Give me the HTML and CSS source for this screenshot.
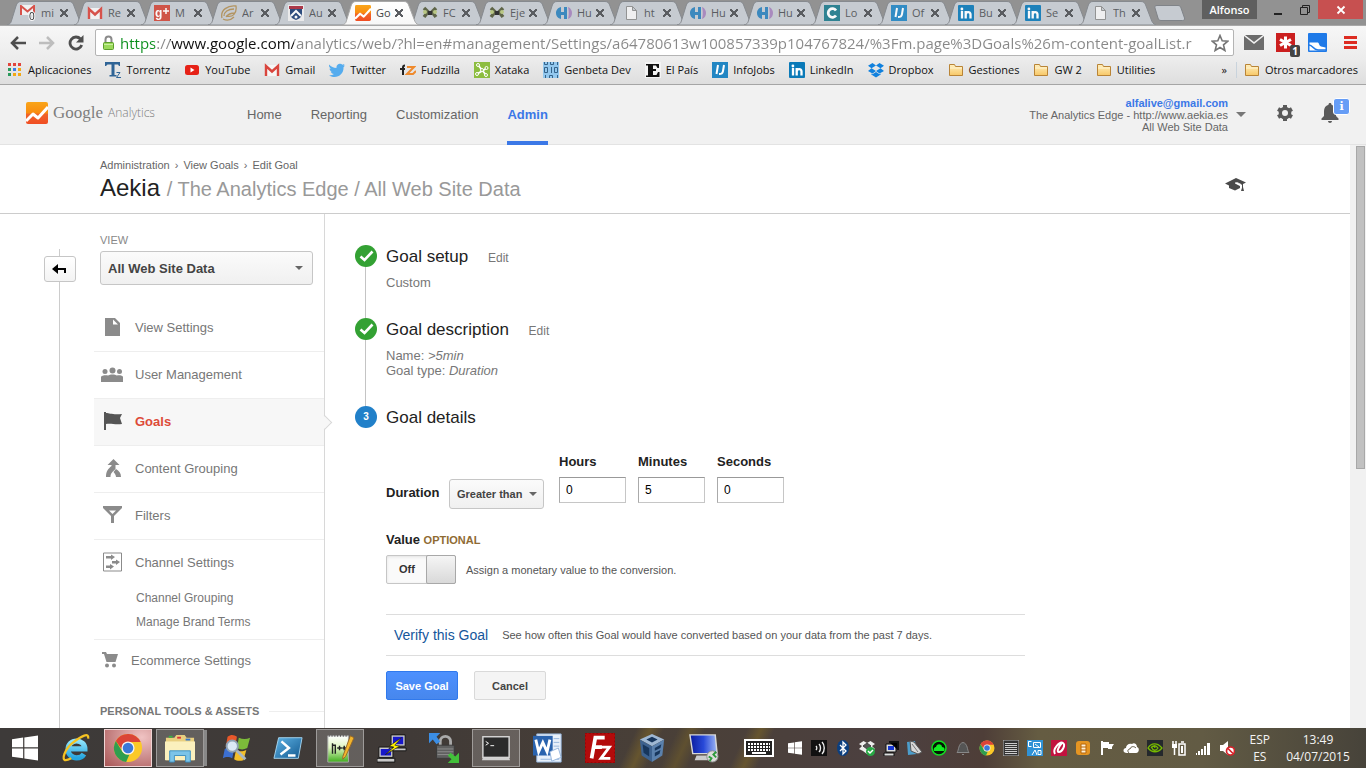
FILE: index.html
```html
<!DOCTYPE html>
<html lang="en">
<head>
<meta charset="utf-8">
<title>Google Analytics</title>
<link rel="stylesheet" href="styles.css">
</head>
<body>
<svg class="sprite" aria-hidden="true">
  <defs>
    <linearGradient id="g-active" x1="0" y1="0" x2="0" y2="1"><stop offset="0" stop-color="#fff"/><stop offset="1" stop-color="#f7f7f7"/></linearGradient>
    <linearGradient id="g-ga" x1="0" y1="0" x2="0" y2="1"><stop offset="0" stop-color="#f9a51a"/><stop offset=".5" stop-color="#f98c0f"/><stop offset=".55" stop-color="#f0652a"/><stop offset="1" stop-color="#f04d22"/></linearGradient>
    <linearGradient id="g-folder" x1="0" y1="0" x2="0" y2="1"><stop offset="0" stop-color="#fff0bf"/><stop offset="1" stop-color="#f7c766"/></linearGradient>
    <linearGradient id="g-ie" x1="0" y1="0" x2="0" y2="1"><stop offset="0" stop-color="#8fe3fb"/><stop offset="1" stop-color="#25a5df"/></linearGradient>
    <linearGradient id="g-ps" x1="0" y1="0" x2="1" y2="1"><stop offset="0" stop-color="#5fb4e6"/><stop offset="1" stop-color="#12588f"/></linearGradient>
    <linearGradient id="g-npp" x1="0" y1="0" x2="0" y2="1"><stop offset="0" stop-color="#fff"/><stop offset=".45" stop-color="#dff5c0"/><stop offset="1" stop-color="#3fae1c"/></linearGradient>
    <linearGradient id="g-rdp" x1="0" y1="0" x2="1" y2="0"><stop offset="0" stop-color="#0b1b9c"/><stop offset=".5" stop-color="#2849d8"/><stop offset="1" stop-color="#9fb8f5"/></linearGradient>
  </defs>
  <symbol id="tab" viewBox="0 0 77 24"><path d="M0 24C4 23 4 21 5 18L9 5C10 2 11 .5 14 .5H62C65 .5 66 2 67 5L72 18C73 21 74 23 77 24Z"/></symbol>
  <symbol id="gmail" viewBox="0 0 16 16"><path fill="#f6f6f6" d="M1 3h14v11H1z"/><path fill="none" stroke="#d9453d" stroke-width="2.4" d="M2 14V4l6 5.5L14 4v10"/></symbol>
  <symbol id="gmail0" viewBox="0 0 16 16"><path fill="#f6f6f6" d="M0 0h15v10H0z"/><path fill="none" stroke="#d9453d" stroke-width="2" d="M1 10V1l6.5 5.500L14 1v9"/><text x="9" y="15" class="t10" fill="#111" stroke="#fff" stroke-width="2" paint-order="stroke">0</text></symbol>
  <symbol id="gplus" viewBox="0 0 16 16"><rect width="16" height="16" fill="#d0483a"/><text x="1" y="12" class="t12 b" fill="#fff">g</text><path stroke="#fff" stroke-width="1.500" d="M9 6h6M12 3v6"/></symbol>
  <symbol id="shell" viewBox="0 0 16 16"><path fill="none" stroke="#b18f55" stroke-width="1.300" d="M1 13C-1 5 7 0 15 1 16 8 12 13 5 11M3 11C3 7 7 4 13 4M5 12c2-3 5-4 9-4M2 14c4 2 8 1 11-2"/></symbol>
  <symbol id="shield" viewBox="0 0 16 16"><rect width="16" height="16" fill="#eee"/><path fill="#1d3f75" d="M2 3h12v5c0 4-3 6-6 7-3-1-6-3-6-7z"/><path fill="#a92a3c" d="M1 1h14v3H1z"/><path stroke="#fff" stroke-width="2" fill="none" d="M3 11l5-5 5 5"/><circle cx="8" cy="12" r="1.500" fill="#fff"/></symbol>
  <symbol id="ga" viewBox="0 0 22 22"><rect width="22" height="22" rx="2" fill="url(#g-ga)"/><path fill="none" stroke="#fff" stroke-width="3" stroke-linejoin="round" d="M0 19l7-7 5 4L22 5"/></symbol>
  <symbol id="joomla" viewBox="0 0 16 16"><g fill="none" stroke="#545b3a" stroke-width="3.500"><path d="M2 3l4 4-4 5M14 3l-4 4 4 5M5 8h6"/></g><circle cx="3" cy="7" r="2" fill="#b8c77c"/><circle cx="13" cy="7" r="2" fill="#b8c77c"/><path fill="#222" d="M6 6h4v4H6z"/></symbol>
  <symbol id="hubble" viewBox="0 0 16 16"><path fill="#2e82bd" d="M5 2v12C1 13 0 10 0 8s1-5 5-6zM5 7h3V2h3v12H8v-4H5z"/><path fill="#a684bd" d="M12 2c3 1 4 4 4 6s-1 5-4 6c1-4 1-8 0-12z"/></symbol>
  <symbol id="file" viewBox="0 0 16 16"><path fill="#f4f4f4" stroke="#8d8d8d" d="M3.500 1.500h6l4 4v9h-10zM9.500 1.500v4h4"/></symbol>
  <symbol id="coursera" viewBox="0 0 16 16"><rect width="16" height="16" fill="#1e7b8c"/><path d="M12 5.500A4.300 4.300 0 1 0 12 10.500" fill="none" stroke="#fff" stroke-width="2.800"/></symbol>
  <symbol id="ij" viewBox="0 0 16 16"><rect width="16" height="16" fill="#2286c3"/><path stroke="#fff" stroke-width="2" fill="none" d="M6 3L4.500 12M12 3l-1 6c-.5 3-2 3-4 3"/></symbol>
  <symbol id="in" viewBox="0 0 16 16"><rect width="16" height="16" rx="1" fill="#0b7ab8"/><circle cx="3.900" cy="4" r="1.400" fill="#fff"/><path fill="none" stroke="#fff" stroke-width="2.300" d="M4 6v7.500M7.700 13.500V6M7.700 9.500c0-3 4.800-3.500 4.800 0v4"/></symbol>
  <symbol id="apps" viewBox="0 0 16 16"><path fill="#e2453c" d="M1 1h3v3H1zM6 1h3v3H6zM11 1h3v3h-3z"/><path fill="#2a9a5c" d="M1 6h3v3H1zM1 11h3v3H1z"/><path fill="#3a7de8" d="M6 6h3v3H6z"/><path fill="#f2a815" d="M11 6h3v3h-3zM11 11h3v3h-3zM6 11h3v3H6z"/></symbol>
  <symbol id="tz" viewBox="0 0 16 16"><path fill="#2f6496" d="M0 0h15v4h-1L13 2.500H9.500V13h2v1.500h-7V13h2V2.500H2.500L1 4H0z"/><path fill="none" stroke="#2f6496" d="M11.500 10.500H15l-3.500 5H16"/></symbol>
  <symbol id="yt" viewBox="0 0 16 16"><rect x="1" y="3" width="14" height="10" rx="2.500" fill="#e62117"/><path fill="#fff" d="M6.500 5.500v5L10.500 8z"/></symbol>
  <symbol id="tw" viewBox="0 0 16 16"><path fill="#55acee" d="M0 2.500c2 2.300 4.500 3.400 7.500 3.500C7 3 9.500 1.500 11 1.700c1 0 1.800.5 2.400 1.100L15.500 2l-1 1.700L16 3.500l-1.500 1.700C15 10.500 11 15 5.500 15c-2 0-4-.6-5.500-1.500 1.800.1 3.500-.3 4.800-1.400C3.300 12 2.200 11 1.800 9.800h1.400C1.600 9.300.6 8 .6 6.400l1.400.4C.3 5.500-.2 4 0 2.500z"/></symbol>
  <symbol id="fz" viewBox="0 0 16 16"><path stroke="#222" stroke-width="2" fill="none" d="M5 3.500c-2 0-2 1-2 2V13M0 7h5"/><path fill="none" stroke="#ef8a2d" stroke-width="2" d="M7 5h7l-7 7h6l3-3"/></symbol>
  <symbol id="xataka" viewBox="0 0 16 16"><rect width="16" height="16" fill="#8cbd3f"/><path stroke="#fff" stroke-width="1.800" d="M4 3l8 10M13 6l-10 6"/><g fill="#8cbd3f" stroke="#fff"><circle cx="4" cy="3" r="1.500"/><circle cx="12.500" cy="6" r="1.500"/><circle cx="3" cy="12" r="1.500"/><circle cx="12" cy="13" r="1.500"/><circle cx="8" cy="8" r="1.500"/></g></symbol>
  <symbol id="genbeta" viewBox="0 0 16 16"><rect width="16" height="16" fill="#93c8ee"/><g fill="none" stroke="#35638a"><path d="M1.500 0v2.500h3V0M7.500 0v2.500h3V0M14.500 0v3M1.500 5.500h3v5h-3zM8.500 5v6M11.500 5.500h3v5h-3zM2.500 13v3M6.500 16v-2.500h3V16M14.500 13v3"/></g></symbol>
  <symbol id="elpais" viewBox="0 0 16 16"><rect width="16" height="16" fill="#f4f4f4"/><path fill="#111" d="M1 2h13v4h-1.500L11 3.500H8V7h3v2H8v4h3.500L13 10h1.500v5H1v-1.500h2V3.500H1z"/></symbol>
  <symbol id="dropbox" viewBox="0 0 16 16"><path fill="#1081de" d="M4.500 1L8 3.500 3.500 6.300 0 3.700zM11.500 1L16 3.700l-3.500 2.600L8 3.500zM0 9l3.500-2.700L8 9.100 4.500 11.500zM12.500 6.300L16 9l-4.500 2.500L8 9.100zM8 10l3.500 2.300 1.200-.7v1L8 15.500l-4.700-2.900v-1l1.200.7z"/></symbol>
  <symbol id="folder" viewBox="0 0 16 16"><path fill="url(#g-folder)" stroke="#b98436" d="M1.500 13.500v-11h5l1 2h7v9z"/><path stroke="#fff3cf" d="M2 6h12"/></symbol>
  <symbol id="chrome" viewBox="0 0 32 32"><circle cx="16" cy="16" r="15" fill="#fbc927"/><path fill="#db4437" d="M3 8.500A15 15 0 0 1 29.500 9.500L16 9.500a7 7 0 0 0-6.500 8z"/><path fill="#2f9e4f" d="M3 8.500L10 20a7 7 0 0 0 7.500 3L14 31A15 15 0 0 1 3 8.500z"/><circle cx="16" cy="16" r="7" fill="#f4f4f4"/><circle cx="16" cy="16" r="5.600" fill="#3b78d8"/></symbol>
  <symbol id="winlogo" viewBox="0 0 28 28"><path fill="#fff" d="M0 4.500L12 2.800V13.300H0zM13.300 2.600L28 .5v12.800H13.300zM0 14.600h12v10.500L0 23.400zM13.300 14.600H28v12.900l-14.700-2.100z"/></symbol>
</svg>

<div class="browser">
  <div class="tabstrip">
    <nav class="tabs" aria-label="Tabs">
      <div class="tab"><svg class="shape"><use href="#tab"/></svg><svg class="ico"><use href="#gmail0"/></svg><span class="name">mi</span><button class="x" aria-label="Close tab"></button></div>
      <div class="tab"><svg class="shape"><use href="#tab"/></svg><svg class="ico"><use href="#gmail"/></svg><span class="name">Re</span><button class="x" aria-label="Close tab"></button></div>
      <div class="tab"><svg class="shape"><use href="#tab"/></svg><svg class="ico"><use href="#gplus"/></svg><span class="name">M</span><button class="x" aria-label="Close tab"></button></div>
      <div class="tab"><svg class="shape"><use href="#tab"/></svg><svg class="ico"><use href="#shell"/></svg><span class="name">Ar</span><button class="x" aria-label="Close tab"></button></div>
      <div class="tab"><svg class="shape"><use href="#tab"/></svg><svg class="ico"><use href="#shield"/></svg><span class="name">Au</span><button class="x" aria-label="Close tab"></button></div>
      <div class="tab active"><svg class="shape"><use href="#tab"/></svg><svg class="ico"><use href="#ga"/></svg><span class="name">Go</span><button class="x" aria-label="Close tab"></button></div>
      <div class="tab"><svg class="shape"><use href="#tab"/></svg><svg class="ico"><use href="#joomla"/></svg><span class="name">FC</span><button class="x" aria-label="Close tab"></button></div>
      <div class="tab"><svg class="shape"><use href="#tab"/></svg><svg class="ico"><use href="#joomla"/></svg><span class="name">Eje</span><button class="x" aria-label="Close tab"></button></div>
      <div class="tab"><svg class="shape"><use href="#tab"/></svg><svg class="ico"><use href="#hubble"/></svg><span class="name">Hu</span><button class="x" aria-label="Close tab"></button></div>
      <div class="tab"><svg class="shape"><use href="#tab"/></svg><svg class="ico"><use href="#file"/></svg><span class="name">ht</span><button class="x" aria-label="Close tab"></button></div>
      <div class="tab"><svg class="shape"><use href="#tab"/></svg><svg class="ico"><use href="#hubble"/></svg><span class="name">Hu</span><button class="x" aria-label="Close tab"></button></div>
      <div class="tab"><svg class="shape"><use href="#tab"/></svg><svg class="ico"><use href="#hubble"/></svg><span class="name">Hu</span><button class="x" aria-label="Close tab"></button></div>
      <div class="tab"><svg class="shape"><use href="#tab"/></svg><svg class="ico"><use href="#coursera"/></svg><span class="name">Lo</span><button class="x" aria-label="Close tab"></button></div>
      <div class="tab"><svg class="shape"><use href="#tab"/></svg><svg class="ico"><use href="#ij"/></svg><span class="name">Of</span><button class="x" aria-label="Close tab"></button></div>
      <div class="tab"><svg class="shape"><use href="#tab"/></svg><svg class="ico"><use href="#in"/></svg><span class="name">Bu</span><button class="x" aria-label="Close tab"></button></div>
      <div class="tab"><svg class="shape"><use href="#tab"/></svg><svg class="ico"><use href="#in"/></svg><span class="name">Se</span><button class="x" aria-label="Close tab"></button></div>
      <div class="tab"><svg class="shape"><use href="#tab"/></svg><svg class="ico"><use href="#file"/></svg><span class="name">Th</span><button class="x" aria-label="Close tab"></button></div>
      <button class="newtab" aria-label="New tab"><svg width="32" height="16" viewBox="0 0 32 16"><path fill="#c6cbd1" stroke="#7f8388" d="M3 .5h21c2 0 2.500 1 3 2.500l3.500 10c.5 1.500-.5 2.500-2 2.500H7c-2 0-2.500-1-3-2.500L1 3C.5 1.500 1 .5 3 .5z"/></svg></button>
    </nav>
    <div class="wincontrols">
      <button class="profile">Alfonso</button>
      <button class="wc" aria-label="Minimize"><svg width="10" height="12"><path fill="#222" d="M1 9h8v2H1z"/></svg></button>
      <button class="wc" aria-label="Restore"><svg width="10" height="12" fill="none" stroke="#222"><path d="M.5 3.500h7v7h-7zM2.500 3V1.500h7v7H8"/></svg></button>
      <button class="wc close" aria-label="Close"><svg width="10" height="12" stroke="#fff" stroke-width="1.800"><path d="M1.500 2.500l7 7M8.500 2.500l-7 7"/></svg></button>
    </div>
  </div>

  <div class="toolbar">
    <button class="tb" aria-label="Back"><svg width="16" height="16" fill="none" stroke="#4e4e4e" stroke-width="2.500"><path d="M16 8H2.500M8 2L2 8l6 6"/></svg></button>
    <button class="tb" aria-label="Forward"><svg width="16" height="16" fill="none" stroke="#bdbdbd" stroke-width="2.500"><path d="M0 8h13.500M8 2l6 6-6 6"/></svg></button>
    <button class="tb" aria-label="Reload"><svg width="16" height="16" fill="none" stroke="#4e4e4e" stroke-width="2.800"><path d="M12.500 4A6 6 0 1 0 13.700 10"/><path fill="#4e4e4e" stroke="none" d="M15.500 0v7.500H8z"/></svg></button>
    <div class="omnibox">
      <svg width="13" height="16" viewBox="0 0 13 16"><path fill="none" stroke="#8a8a8a" stroke-width="2" d="M3.500 8V4.500a3 3 0 0 1 6 0V8"/><rect x="1.500" y="7.500" width="10" height="7" rx="1" fill="#9bd95b" stroke="#5c9e2b"/><path stroke="#c9f0a0" d="M2 9.500h9"/></svg>
      <input class="url" type="text" aria-label="Address" value="https://www.google.com/analytics/web/?hl=en#management/Settings/a64780613w100857339p104767824/%3Fm.page%3DGoals%26m-content-goalList.r">
      <button class="star" aria-label="Bookmark this page"><svg width="18" height="18" viewBox="0 0 18 18"><path fill="#fff" stroke="#757575" stroke-width="1.600" d="M9 1.500l2.200 5.200 5.600.5-4.300 3.700 1.400 5.600L9 13.500l-4.900 3 1.400-5.600L1.200 7.200l5.600-.5z"/></svg></button>
    </div>
    <div class="exts">
      <button class="tb" aria-label="Mail"><svg width="20" height="20"><path fill="#6c6c6c" d="M0 3l10 8 10-8v14H0zM1 2h18l-9 7z"/></svg></button>
      <button class="tb ext" aria-label="LastPass"><svg width="20" height="20"><rect width="19" height="19" fill="#cb1f1f"/><path stroke="#fff" stroke-width="3" d="M9.500 3.500v12M4 6.500l11 6M15 6.500l-11 6"/></svg><span class="count">1</span></button>
      <button class="tb" aria-label="Reader"><svg width="20" height="20"><rect width="19" height="19" rx="1" fill="#1f7ae8"/><path fill="#fff" d="M1.500 9.500h8.500c1.500 1.500 1 3 3 4l4.500 1v3h-16z"/><path fill="none" stroke="#1f7ae8" stroke-width="1.500" d="M1 12c4 0 4 5 9 5h8"/></svg></button>
      <button class="tb" aria-label="Menu"><svg width="13" height="14"><path fill="#dd2c22" d="M0 0h13v3H0zM0 5h13v3H0zM0 10h13v3H0z"/></svg></button>
    </div>
  </div>

  <nav class="bookmarks" aria-label="Bookmarks">
    <a href="#"><svg class="ico"><use href="#apps"/></svg>Aplicaciones</a>
    <a href="#"><svg class="ico"><use href="#tz"/></svg>Torrentz</a>
    <a href="#"><svg class="ico"><use href="#yt"/></svg>YouTube</a>
    <a href="#"><svg class="ico"><use href="#gmail"/></svg>Gmail</a>
    <a href="#"><svg class="ico"><use href="#tw"/></svg>Twitter</a>
    <a href="#"><svg class="ico"><use href="#fz"/></svg>Fudzilla</a>
    <a href="#"><svg class="ico"><use href="#xataka"/></svg>Xataka</a>
    <a href="#"><svg class="ico"><use href="#genbeta"/></svg>Genbeta Dev</a>
    <a href="#"><svg class="ico"><use href="#elpais"/></svg>El País</a>
    <a href="#"><svg class="ico"><use href="#ij"/></svg>InfoJobs</a>
    <a href="#"><svg class="ico"><use href="#in"/></svg>LinkedIn</a>
    <a href="#"><svg class="ico"><use href="#dropbox"/></svg>Dropbox</a>
    <a href="#"><svg class="ico"><use href="#folder"/></svg>Gestiones</a>
    <a href="#"><svg class="ico"><use href="#folder"/></svg>GW 2</a>
    <a href="#"><svg class="ico"><use href="#folder"/></svg>Utilities</a>
    <button class="more" aria-label="More bookmarks">»</button>
    <a href="#" class="other"><svg class="ico"><use href="#folder"/></svg>Otros marcadores</a>
  </nav>

  <header class="ga-header">
    <a class="logo" href="#"><svg width="22" height="22"><use href="#ga"/></svg><span class="google">Google</span><span class="analytics">Analytics</span></a>
    <nav class="ga-nav">
      <a href="#">Home</a><a href="#">Reporting</a><a href="#">Customization</a><a href="#" class="current">Admin</a>
    </nav>
    <button class="account">
      <span class="who"><b>alfalive@gmail.com</b><span>The Analytics Edge - http://www.aekia.es</span><span>All Web Site Data</span></span>
      <span class="caret"></span>
    </button>
    <button class="plain" aria-label="Settings"><svg width="18" height="18" viewBox="0 0 18 18"><g fill="#5a5a5a"><circle cx="9" cy="9" r="6.300"/><path d="M7 1h4v16H7z"/><path d="M7 1h4v16H7z" transform="rotate(60 9 9)"/><path d="M7 1h4v16H7z" transform="rotate(120 9 9)"/></g><circle cx="9" cy="9" r="3" fill="#f1f1f1"/></svg></button>
    <button class="plain bell" aria-label="Notifications"><svg width="18" height="20" viewBox="0 0 18 20"><path fill="#5a5a5a" d="M9 0c1 0 1.500.7 1.500 1.700C13.500 2.500 15 5 15 8v5l2.500 2.500V17H.5v-1.500L3 13V8c0-3 1.500-5.500 4.500-6.300C7.500.7 8 0 9 0zM7 18h4c0 1-1 2-2 2s-2-1-2-2z"/></svg><span class="info">i</span></button>
  </header>

  <div class="viewport">
    <div class="page">
      <div class="titlebar">
        <div>
          <nav class="crumbs" aria-label="Breadcrumb"><a href="#">Administration</a><span>›</span><a href="#">View Goals</a><span>›</span><a href="#">Edit Goal</a></nav>
          <h1>Aekia <small>/ The Analytics Edge / All Web Site Data</small></h1>
        </div>
        <button class="plain edu" aria-label="Education"><svg width="22" height="14" viewBox="0 0 22 14"><path fill="#4a4a4a" d="M0 5.500L11 0l10 4.500-3 1.500v3l1 4h-3l1-3.500V7L12 4.500l-2 1L15 8v2l-5 2.500L4 10V7.500z"/><path fill="none" stroke="#fff" d="M10 5c3-.5 4 .5 6 1.500v4"/></svg></button>
      </div>
      <div class="columns">
        <div class="rail"><button class="back" aria-label="Back"><svg width="16" height="12"><path fill="none" stroke="#000" stroke-width="2" d="M4 6h9v4"/><path fill="#000" d="M6 1v10L0 6z"/></svg></button></div>
        <aside class="side">
          <label class="viewlabel" for="view">VIEW</label>
          <span class="select big"><select id="view"><option>All Web Site Data</option></select></span>
          <ul class="menu">
            <li><a href="#"><svg width="24" height="20" fill="#8b8b8b"><path d="M5 1h10l5 5v13H5z"/><path fill="#fff" d="M13 2.500v5h5z"/></svg>View Settings</a></li>
            <li><a href="#"><svg width="24" height="20" fill="#8b8b8b"><circle cx="5" cy="7.500" r="2.500"/><circle cx="12.500" cy="6.500" r="3"/><circle cx="19.500" cy="7.500" r="2.500"/><path d="M1 18v-5c0-2 6-2 7-1.500 2-1.500 7-1.500 9 0 1-.5 6-.5 6 1.500v5z"/></svg>User Management</a></li>
            <li class="on"><a href="#"><svg width="24" height="20" fill="#555"><path d="M4 1h2v18H4z"/><path d="M6 2c4 0 6 2 16 1l-2 4 2 6c-7 1-11-1-16 0z"/></svg>Goals</a></li>
            <li><a href="#"><svg width="24" height="20" fill="#8b8b8b"><path d="M13.500 1l6 6h-4v4c-3 3-5 4-5 8H6c0-6 2-8 5.500-11V7h-4zM16 11c3 2 5 4 5 8h-5c0-2-1-3-2.500-5z"/></svg>Content Grouping</a></li>
            <li><a href="#"><svg width="24" height="20" fill="#8b8b8b"><path d="M3 1h19v2l-8 8v7h-3v-7L3 3z"/><path fill="#fff" d="M9 5.500h7L12.500 9z"/></svg>Filters</a></li>
            <li><a href="#"><svg width="24" height="20" fill="#8b8b8b"><path fill="none" stroke="#8b8b8b" d="M3.500 1h18v18h-18z"/><path d="M6 4h5V2.500l4 2.500-4 3V6.500H6zM12 9h4V7.500l4 2.500-4 3v-1.500h-4zM6 13.500h4V12l4 2.500-4 3V16H6z"/></svg>Channel Settings</a>
              <ul><li><a href="#">Channel Grouping</a></li><li><a href="#">Manage Brand Terms</a></li></ul></li>
            <li class="shop"><a href="#"><svg width="20" height="18" fill="#8b8b8b"><path d="M1 1h4l1 2h11l-2.500 8H5.500L3 3H1z"/><circle cx="6" cy="14.500" r="2"/><circle cx="13" cy="14.500" r="2"/></svg>Ecommerce Settings</a></li>
          </ul>
          <h2 class="tools">PERSONAL TOOLS &amp; ASSETS</h2>
        </aside>
        <main class="goal">
          <section class="step">
            <span class="dot done"><svg width="22" height="22"><path fill="none" stroke="#fff" stroke-width="2.600" d="M5.500 11.500l4 3.500 8-8.500"/></svg></span>
            <h2>Goal setup <a href="#">Edit</a></h2>
            <p>Custom</p>
          </section>
          <section class="step tall">
            <span class="dot done"><svg width="22" height="22"><path fill="none" stroke="#fff" stroke-width="2.600" d="M5.500 11.500l4 3.500 8-8.500"/></svg></span>
            <h2>Goal description <a href="#">Edit</a></h2>
            <p>Name: <i>&gt;5min</i><br>Goal type: <i>Duration</i></p>
          </section>
          <section class="step last">
            <span class="dot">3</span>
            <h2>Goal details</h2>
          </section>
          <form class="details">
            <div class="duration">
              <label for="cmp">Duration</label>
              <span class="select"><select id="cmp"><option>Greater than</option></select></span>
              <label class="time">Hours<input type="text" value="0"></label>
              <label class="time">Minutes<input type="text" value="5"></label>
              <label class="time">Seconds<input type="text" value="0"></label>
            </div>
            <div class="value">Value <small>OPTIONAL</small></div>
            <label class="money"><input type="checkbox"><span class="switch"><span class="off">Off</span><span class="knob"></span></span>Assign a monetary value to the conversion.</label>
            <div class="verify"><a href="#">Verify this Goal</a><span>See how often this Goal would have converted based on your data from the past 7 days.</span></div>
            <div class="actions"><button type="button" class="btn save">Save Goal</button><button type="button" class="btn">Cancel</button></div>
          </form>
        </main>
      </div>
    </div>
    <div class="scrollbar"><div class="thumb"></div></div>
  </div>

  <footer class="taskbar">
    <button class="start" aria-label="Start"><svg width="26" height="26"><use href="#winlogo"/></svg></button>
    <div class="apps">
      <button aria-label="Internet Explorer"><svg viewBox="0 0 32 32"><path fill="none" stroke="url(#g-ie)" stroke-width="5.500" d="M8 17h17.500c0-5-4-8.500-9-8.500S7.500 12.500 7.500 17.500s4 9 9 9c3.500 0 6.500-1.500 8-4"/><path fill="none" stroke="#f6c322" stroke-width="2.400" d="M5 29c-5 0-1-12 8-19S30-1 29 6M5 29c2 0 4-1 6-2"/></svg></button>
      <button class="live" aria-label="Chrome"><svg viewBox="0 0 32 32"><use href="#chrome"/></svg></button>
      <button class="open stack" aria-label="File Explorer"><svg viewBox="0 0 32 32"><path fill="#e9cf7f" d="M1 5h9l2-3h9l2 3h8v24H1z"/><path fill="#fbf0bd" d="M0 9h32v20H0z"/><path fill="#3cb043" d="M4 3h4v2H4z"/><path fill="#d33" d="M13 4h4v2h-4z"/><path fill="#37c" d="M22 6h5v2h-5z"/><path fill="#7cc4e8" stroke="#3d8fc0" d="M5 31V19h22v12h-5v-7H10v7z"/></svg></button>
      <button aria-label="Windows Search"><svg viewBox="0 0 32 32"><path fill="#e8582a" d="M7 4c4-3 7-2 10 0l-2 11c-4-2-7-2-10 0z"/><path fill="#7cba3a" d="M19 5c4 2 8 2 12 0l-3 11c-4 2-7 2-11 0z"/><path fill="#3c6fd0" d="M4 17c4-2 7-2 10 0l-2 10c-3-2-7-2-10 0z"/><path fill="#f3bf2b" d="M16 18c4 2 7 2 11 0l-3 11c-4 1-7 1-10-1z"/><circle cx="12" cy="14" r="6" fill="#dceaf7" stroke="#8fa3b5" stroke-width="2"/><path stroke="#a9b7c4" stroke-width="3" d="M17 19l9 9"/></svg></button>
      <button aria-label="PowerShell"><svg viewBox="0 0 32 32"><path fill="url(#g-ps)" stroke="#a5d5f0" d="M6 5h25l-4 22H1z"/><path fill="none" stroke="#fff" stroke-width="2.600" d="M9 9l8 7-9 7M16 24h8"/></svg></button>
      <button class="open" aria-label="Notepad++"><svg viewBox="0 0 32 32"><path fill="url(#g-npp)" stroke="#aaa" d="M3 3h22v28H3z"/><path stroke="#555" stroke-dasharray="1 2" stroke-width="2" d="M4 3h20"/><path fill="none" stroke="#222" stroke-width="1.500" d="M8 22V11M8 13h3v9M13 16h5M15.500 13.500v5M18.500 16h4M20.500 13.500v5"/><path fill="#f3b52d" stroke="#94662a" d="M19 25l8-22 4 2-9 20-3 3z"/></svg></button>
      <button aria-label="PuTTY"><svg viewBox="0 0 32 32"><g fill="#c9c9c9" stroke="#111"><path d="M15 2h15v12H15zM13 16h18v3H13zM2 15h15v11H2zM0 27h19v4H0z"/></g><path fill="#1717c9" d="M17 4h11v8H17zM4 17h11v7H4z"/><path fill="#fff200" stroke="#111" stroke-width=".6" d="M26 5l-13 9 5 1-9 8 15-9-5-1z"/></svg></button>
      <button aria-label="WinSCP"><svg viewBox="0 0 32 32"><path fill="none" stroke="#aaa" stroke-width="3" d="M12 14V9a5 5 0 0 1 11 0v5"/><rect x="8" y="13" width="19" height="14" rx="1" fill="#606060" stroke="#3a3a3a"/><path stroke="#8f8f8f" d="M9 17h17M9 20h17M9 23h17"/><path fill="#3b8ee5" d="M0 0h12L8 4l4 5-4 3-4-5-4 4z"/><path fill="#42c03a" d="M32 32H20l4-4-4-4 3-3 5 4 4-4z"/></svg></button>
      <button class="open" aria-label="Command Prompt"><svg viewBox="0 0 32 32"><rect x="2" y="4" width="28" height="22" fill="#2b2b2b" stroke="#d9d9d9" stroke-width="1.500"/><path fill="#d0d0d0" d="M2 26h28l1 3H1z"/><path fill="none" stroke="#fff" d="M5 9l3 2-3 2M10 13.500h4"/></svg></button>
      <button aria-label="Word"><svg viewBox="0 0 32 32"><path fill="#e8f0fa" stroke="#94b4dc" d="M4 1h26v30H4z"/><path stroke="#94b4dc" d="M22 6h6M22 10h6M22 14h6M8 28h20"/><rect y="3" width="21" height="21" fill="#2a63ae"/><path fill="none" stroke="#fff" stroke-width="3" d="M3 7l3 13 4.500-10L15 20l3-13"/><path fill="#fff" stroke="#94b4dc" d="M18 20l9-4 3 10-10 4z"/></svg></button>
      <button aria-label="FileZilla"><svg viewBox="0 0 32 32"><rect width="32" height="32" fill="#b30b0b" stroke="#7d0000" stroke-dasharray="2 2"/><path fill="none" stroke="#fff" stroke-width="4" d="M21 5H11L7 27M9 15h9"/><path fill="none" stroke="#fff" stroke-width="3" d="M16 15h10l-9 12h10"/></svg></button>
      <button aria-label="VirtualBox"><svg viewBox="0 0 32 32"><path fill="#9fb8d3" d="M16 1l13 6-13 7L3 7z"/><path fill="#3d628f" d="M3 7l13 7v17L5 24z"/><path fill="#5b81ad" d="M29 7l-13 7v17l11-7z"/><path fill="#17365c" d="M16 4l6 3-6 3-6-3zM6 12l7 4v9l-6-4zM19 16l7-4-1 4-6 3v2l6-3-1 4-5 3z"/></svg></button>
      <button aria-label="Remote Desktop"><svg viewBox="0 0 32 32"><path fill="#ccc" d="M8 24h14l4 5H6z"/><path fill="url(#g-rdp)" stroke="#d8d8d8" stroke-width="1.500" d="M1 2h27l2 20H4z"/><circle cx="25" cy="25" r="6" fill="#dcdcdc" stroke="#888"/><path fill="none" stroke="#2b9a3a" stroke-width="2" d="M21 25l3 2-2 3M29 20l-3 3 3 3"/></svg></button>
    </div>
    <button class="keyboard" aria-label="Touch keyboard"><svg width="30" height="18"><path fill="#222" stroke="#fff" stroke-width="2" d="M1 1h28v16H1z"/><path stroke="#fff" stroke-width="2" stroke-dasharray="2 1" d="M4 5h22M4 8h22M4 11h22"/><path stroke="#fff" stroke-width="2" d="M8 14h14"/></svg></button>
    <div class="tray">
      <svg viewBox="-2 -2 32 32"><use href="#winlogo" width="28" height="28"/></svg>
      <svg viewBox="0 0 16 16"><rect width="16" height="16" fill="#111"/><path fill="none" stroke="#eee" stroke-width="1.400" d="M5 6c1 1 1 3 0 4M8 4c2 2 2 6 0 8M11 2c3 3 3 9 0 12"/></svg>
      <svg viewBox="0 0 16 16"><ellipse cx="8" cy="8" rx="6" ry="8" fill="#0b3f80"/><path fill="none" stroke="#fff" stroke-width="1.300" d="M5 5l6 6-3 3V2l3 3-6 6"/></svg>
      <svg viewBox="0 0 16 16"><path fill="#eee" d="M4.500 1L8 3l3.500-2L16 4l-3 2 3 3-4 2-4 3-4-3-4-2 3-3-3-2z"/><path stroke="#444" d="M4 6l4-3 4 3-4 3z" fill="#555"/><circle cx="11.500" cy="11.500" r="4.500" fill="#27a844"/><path fill="none" stroke="#fff" stroke-width="1.500" d="M9 11l2 2 3-3"/></svg>
      <svg viewBox="0 0 16 16"><path fill="#ddd" stroke="#111" d="M3 4h10v8H3zM1 13h10v3H1z"/><path fill="#1738d0" d="M5 6h6v4H5z"/><path stroke="#111" stroke-width="2" d="M6 2h9v8"/></svg>
      <svg viewBox="0 0 16 16"><path fill="#4c9dcb" d="M0 2l8-1 2 13-9 1z"/><path fill="#d8d8d8" stroke="#555" d="M3 1l4 1 8 10-4 2-7-3z"/><path stroke="#777" d="M5 4l6 8"/></svg>
      <svg viewBox="0 0 16 16"><circle cx="8" cy="8" r="7" fill="#041504" stroke="#11df22" stroke-width="1.500"/><path fill="#11ef22" d="M3 11c-1-3 1-4 2-4 1-4 6-3 6 0 3 0 3 3 2 4z"/></svg>
      <svg viewBox="0 0 16 16"><path fill="#555" stroke="#888" d="M2 12.500c2-2 1-9 6-10 5 1 4 8 6 10zM7 14.500h2"/></svg>
      <svg viewBox="0 0 32 32"><use href="#chrome"/></svg>
      <svg viewBox="0 0 16 16"><rect width="16" height="16" fill="#333" stroke="#bbb"/><path stroke="#ccc" d="M2 3.500h12M2 5.500h12M2 7.500h12M2 9.500h12M2 11.500h12M2 13.500h12"/></svg>
      <svg viewBox="0 0 16 16"><rect width="16" height="16" fill="#2f92d6"/><path fill="none" stroke="#fff" d="M1.500 1.500h3M1.500 1.500v5h3M6.500 2.500h7v5h-7zM8 4l4 3M5 15l3-5 2 5M11 10.500h3v4h-3z"/></svg>
      <svg viewBox="0 0 16 16"><rect width="16" height="16" fill="#c2123f"/><path fill="none" stroke="#fff" stroke-width="2" d="M4 14C1 9 9 1 12 3s-1 9-4 9 0-6 3-9"/></svg>
      <svg viewBox="0 0 16 16"><rect x="1" y="1" width="14" height="14" rx="3" fill="#e59522"/><path fill="#fff2d6" stroke="#b66508" d="M6 4h5v9H6z"/><path stroke="#b66508" d="M6 7h5M6 10h5"/></svg>
      <svg viewBox="0 0 16 16"><path fill="#fff" d="M2 1h2v14H2zM4 2h6v6H4zM10 4h5l-2 3v2h-4V7z"/></svg>
      <svg viewBox="0 0 16 16"><path fill="#fff" d="M4 13c-5 0-4-5-1-5 0-3 3-5 6-4 2-2 5 0 5 3 3 1 2 6-1 6z"/><path fill="none" stroke="#5b543f" d="M6 13c-2-2-1-4 1-4 1-3 4-3 6-1"/></svg>
      <svg viewBox="0 0 16 16"><rect width="16" height="16" fill="#24282c"/><path fill="none" stroke="#76b900" stroke-width="1.300" d="M1 8c3-5 9-6 14 0-4 5-10 5-14 0zM4 8c2-3 5-3 7 0-2 3-5 3-6 0s3-2 3 0"/></svg>
      <svg viewBox="0 0 16 16"><path fill="none" stroke="#fff" stroke-width="1.500" d="M8 4h6v11H8zM10 2h3M2 1v3M5 1v3M3.500 8v7"/><path fill="#fff" d="M1 4h5v4H1zM10 6h2v7h-2z"/></svg>
      <svg viewBox="0 0 16 16"><path fill="#fff" d="M1 13h1v2H1zM3 11h2v4H3zM6 9h2v6H6zM9 6h2v9H9zM12 3h3v12h-3z"/></svg>
      <svg viewBox="0 0 16 16"><path fill="#fff" d="M1 5h3l5-4v14L4 11H1z"/><circle cx="11.500" cy="11" r="4" fill="#fff" stroke="#d8222a" stroke-width="1.700"/><path stroke="#d8222a" stroke-width="1.700" d="M9 8.500l5 5"/></svg>
    </div>
    <div class="lang"><span>ESP</span><span>ES</span></div>
    <div class="clock"><span>13:49</span><span>04/07/2015</span></div>
  </footer>
</div>
</body>
</html>
```
FILE: styles.css
```css
* { box-sizing: border-box; }
body { margin: 0; background: #fff; font: 13px "Liberation Sans", Arial, sans-serif; color: #222; }
button { font: inherit; color: inherit; background: none; border: 0; padding: 0; }
a { color: inherit; text-decoration: none; }
h1, h2, p, ul { margin: 0; padding: 0; font-weight: normal; list-style: none; }
svg { display: block; flex: none; }
.sprite { position: absolute; width: 0; height: 0; }
.t10 { font: 10px "Open Sans", sans-serif; }
.t12 { font: 12px "Liberation Sans", sans-serif; }
.b { font-weight: bold; }
.ico { width: 16px; height: 16px; }

.browser { display: flex; flex-direction: column; height: 100vh; overflow: hidden; }

/* tab strip */
.tabstrip { display: flex; flex: none; justify-content: space-between; height: 25px; background: #929292; font: 11px "Open Sans", "Noto Sans", sans-serif; }
.tabs { display: flex; padding-left: 7px; }
.tab { position: relative; display: flex; align-items: center; flex: none; width: 67px; height: 25px; padding-left: 13px; color: #5a5d61; }
.shape { position: absolute; left: 0; bottom: 0; width: 77px; height: 24px; fill: #c6cbd1; stroke: #868a8f; }
.tab .ico { z-index: 2; opacity: .9; }
.tab .name, .tab .x { z-index: 2; }
.tab.active { z-index: 1; color: #444; }
.tab.active .shape { fill: url(#g-active); stroke: #a8a8a8; }
.tab.active .ico { opacity: 1; }
.name { width: 15px; margin: 0 4px 0 5px; overflow: hidden; white-space: nowrap; }
.x { width: 8px; height: 8px; background: linear-gradient(45deg, transparent 42%, #5a5d61 42% 58%, transparent 58%), linear-gradient(-45deg, transparent 42%, #5a5d61 42% 58%, transparent 58%); }
.newtab { align-self: flex-start; padding: 5px 0 0 8px; }
.wincontrols { display: flex; align-items: flex-start; padding-right: 3px; }
.profile { width: 55px; height: 19px; margin-right: 7px; background: #5f5f5f; color: #fff; font-size: 11px; font-weight: 600; line-height: 17px; }
.wc { display: flex; align-items: center; justify-content: center; width: 27px; height: 19px; }
.wc.close { width: 45px; background: #c75050; }

/* toolbar */
.toolbar { display: flex; flex: none; align-items: center; height: 34px; padding: 0 9px 0 10px; background: linear-gradient(#f7f7f7, #ececec); border-top: 1px solid #a8a8a8; }
.tb { margin-right: 13px; }
.omnibox { display: flex; flex: 1; align-items: center; height: 27px; margin-left: -2px; padding: 0 4px 0 6px; background: #fff; border: 1px solid #b4b4b4; border-radius: 2px; }
.url { flex: 1; min-width: 0; margin-left: 5px; padding: 0; border: 0; outline: 0; font: 15px "Open Sans", "Noto Sans", sans-serif; line-height: 24px; color: transparent; background: linear-gradient(90deg, #0a8f1c 35px, #888 35px 50px, #111 50px 174px, #888 174px); background-clip: text; -webkit-background-clip: text; }
.exts { display: flex; align-items: center; padding-left: 10px; }
.exts .tb { margin-right: 12px; }
.exts .tb:last-child { margin: 0 0 0 4px; }
.ext { position: relative; }
.count { position: absolute; right: -4px; bottom: -4px; width: 10px; height: 12px; background: #444; border-radius: 2px; color: #fff; font: bold 10px/12px "Open Sans", sans-serif; }

/* bookmarks */
.bookmarks { display: flex; flex: none; align-items: center; gap: 14px; height: 26px; padding: 0 8px 4px 7px; background: linear-gradient(#ececec, #dedede); border-bottom: 1px solid #a5a5a5; font: 11px "Open Sans", "Noto Sans", sans-serif; color: #111; white-space: nowrap; }
.bookmarks a { display: flex; align-items: center; gap: 5px; }
.more { margin-left: auto; }
.other { padding-left: 7px; margin-left: -5px; border-left: 1px solid #c9d3dc; }

/* analytics header */
.ga-header { display: flex; flex: none; height: 60px; padding: 0 16px 0 26px; align-items: stretch; background: #f1f1f1; border-bottom: 1px solid #e3e3e3; color: #666; }
.logo { display: flex; align-items: center; width: 221px; padding-bottom: 4px; color: #7e7e7e; }
.google { margin-left: 5px; font: 17px "Liberation Serif", serif; }
.analytics { margin-left: 5px; font: 300 12px "Open Sans", sans-serif; line-height: 20px; }
.ga-nav { display: flex; gap: 29px; margin-right: auto; }
.ga-nav a { height: 60px; line-height: 60px; }
.ga-nav .current { color: #3b78e7; font-weight: bold; border-bottom: 4px solid #3b78e7; }
.account { display: flex; align-items: center; gap: 8px; font-size: 11px; line-height: 12px; }
.who { display: flex; flex-direction: column; text-align: right; }
.who b { color: #3b78e7; }
.caret { border: 5px solid transparent; border-top-color: #777; border-bottom: 0; }
.plain { display: flex; align-items: center; margin-left: 30px; padding-bottom: 4px; }
.bell { position: relative; margin: 0 0 0 27px; padding-right: 11px; }
.info { position: absolute; right: 0; top: 13px; width: 17px; height: 17px; border: 1px solid #fff; border-radius: 3px; background: #669df6; color: #fff; font: bold 11px/15px "DejaVu Serif", serif; text-align: center; }

/* page */
.viewport { display: flex; flex: 1; min-height: 0; }
.page { display: flex; flex: 1; flex-direction: column; overflow: hidden; }
.scrollbar { width: 16px; padding: 1px 1px 0 6px; background: #f1f1f1; }
.thumb { height: 323px; background: #c1c1c1; border: 1px solid #a8a8a8; }
.titlebar { display: flex; flex: none; justify-content: space-between; padding: 14px 103px 10px 100px; height: 69px; border-bottom: 1px solid #ccc; }
.crumbs { display: flex; gap: 5px; font-size: 11px; line-height: 13px; color: #666; }
h1 { font-size: 24px; line-height: 32px; }
h1 small { font-size: 20px; color: #999; }
.edu { padding: 8px 0 0; }
.columns { display: flex; flex: 1; min-height: 0; }
.rail { flex: none; width: 50px; margin: 35px 0 0 44px; padding-top: 7px; background: linear-gradient(#ccc, #ccc) 15px 0 / 1px 100% no-repeat; }
.back { display: flex; align-items: center; justify-content: center; width: 32px; height: 26px; background: linear-gradient(#fff, #f3f3f3); border: 1px solid #c6c6c6; border-radius: 3px; }
.side { flex: none; width: 231px; height: 560px; padding-top: 19px; border-right: 1px solid #d8d8d8; color: #777; }
.viewlabel { display: block; margin-left: 6px; font-size: 11px; line-height: 14px; color: #888; }
.select { position: relative; display: inline-block; }
.select select { width: 95px; height: 30px; padding: 0 7px; appearance: none; border: 1px solid #c6c6c6; border-radius: 3px; background: linear-gradient(#fbfbfb, #f0f0f0); font: bold 11px "Liberation Sans", sans-serif; color: #444; }
.select::after { content: ""; position: absolute; right: 7px; top: 13px; border: 4px solid transparent; border-top-color: #666; border-bottom: 0; }
.big { display: block; margin: 4px 11px 20px 6px; }
.big select { width: 100%; height: 34px; font-size: 13px; }
.big::after { right: 10px; top: 15px; }
.menu > li { border-bottom: 1px solid #eee; }
.menu > li > a { display: flex; align-items: center; gap: 11px; height: 46px; padding: 0 0 2px 6px; }
.menu li.on { position: relative; background: #f7f7f7; color: #dd4b39; font-weight: bold; }
.on::after { content: ""; position: absolute; right: -6px; top: 18px; width: 10px; height: 10px; background: linear-gradient(45deg, transparent 50%, #f7f7f7 50%); border: solid #d8d8d8; border-width: 1px 1px 0 0; transform: rotate(45deg); }
.menu ul { padding: 0 0 5px 42px; font-size: 12px; line-height: 24px; }
.menu > .shop { border: 0; }
.menu > .shop > a { gap: 10px; padding-left: 7px; height: 42px; }
.tools { display: flex; align-items: center; gap: 10px; margin: 22px 0 0 6px; font-size: 11px; font-weight: bold; line-height: 14px; white-space: nowrap; }
.tools::after { content: ""; flex: 1; height: 1px; background: #eee; }

/* goal steps */
.goal { flex: 1; padding: 31px 325px 0 30px; }
.step { position: relative; padding-left: 31px; height: 73px; background: linear-gradient(#c4c4c4, #c4c4c4) 10px 0 / 1px 100% no-repeat; }
.tall { height: 88px; }
.last { height: 22px; }
.dot { position: absolute; left: 0; top: 0; width: 22px; height: 22px; border-radius: 50%; background: #2180c9; color: #fff; font: bold 10px/22px "Liberation Sans", sans-serif; text-align: center; }
.done { background: #33a133; }
.step h2 { font-size: 17px; line-height: 24px; }
.step h2 a { margin-left: 15px; font-size: 12px; color: #777; }
.step p { margin-top: 5px; line-height: 15px; color: #777; }
.details { padding: 26px 0 0 31px; }
.duration { display: flex; align-items: flex-start; font-weight: bold; }
.duration > label:first-child { width: 63px; margin-top: 31px; line-height: 16px; }
.duration .select { margin: 25px 15px 0 0; }
.time { display: flex; flex-direction: column; gap: 7px; width: 67px; margin-right: 12px; line-height: 16px; }
.time input { width: 100%; height: 26px; padding: 0 6px; border: 1px solid #c6c6c6; border-top-color: #999; border-left-color: #aaa; font: 12px "Liberation Sans", sans-serif; }
.value { margin-top: 23px; font-weight: bold; line-height: 16px; }
.value small { font-size: 11px; color: #8f6b33; }
.money { display: flex; align-items: center; margin-top: 7px; font-size: 11px; color: #555; }
.money input { position: absolute; opacity: 0; }
.switch { display: flex; width: 70px; height: 29px; margin-right: 10px; border: 1px solid #c6c6c6; border-radius: 2px; background: #fafafa; box-shadow: inset 0 1px 3px #e2e2e2; }
.off { width: 40px; font-weight: bold; line-height: 26px; text-align: center; color: #333; }
.knob { width: 30px; margin: -1px; border: 1px solid #a8a8a8; border-radius: 2px; background: linear-gradient(#f5f5f5, #d9d9d9); }
.verify { display: flex; align-items: center; gap: 14px; height: 42px; margin-top: 30px; padding-left: 8px; border: solid #ddd; border-width: 1px 0; font-size: 11px; color: #555; }
.verify a { font-size: 14px; color: #15569b; }
.actions { display: flex; gap: 16px; margin-top: 15px; }
.btn { width: 72px; height: 29px; border: 1px solid #d9d9d9; border-radius: 2px; background: #f4f4f4; font-size: 11px; font-weight: bold; color: #444; }
.save { border-color: #3079ed; background: linear-gradient(#4d90fe, #4787ed); color: #fff; }

/* taskbar */
.taskbar { display: flex; flex: none; align-items: center; height: 40px; padding-right: 15px; color: #f4f4f4; font: 12px "Open Sans", sans-serif; background: linear-gradient(115deg, transparent 46%, #66552f 47%, transparent 48% 49%, #5f5030 50%, transparent 51% 54%, #66552f 55%, transparent 56%), linear-gradient(90deg, #3d3a39, #403a37 30%, #4a4038 50%, #4c4040 65%, #4e3e38 72%, #655c42 76%, #625b44 88%, #47433a); }
.start { width: 50px; padding-left: 12px; }
.apps { display: flex; }
.apps button { display: flex; align-items: center; justify-content: center; width: 48px; height: 38px; margin: 0 2px; border: 1px solid transparent; }
.apps button svg { width: 30px; height: 30px; }
.apps .live { background: radial-gradient(at 80% 20%, #f0c3c3, #a85656); border-color: #f0d5d5; }
.apps .open { background: #ffffff30; border-color: #ffffff60; }
.apps .stack { margin-right: 6px; box-shadow: 4px 0 0 -1px #888; }
.keyboard { margin-left: 14px; }
.tray { display: flex; gap: 8px; margin: 0 auto 0 13px; }
.tray svg { width: 16px; height: 16px; }
.lang, .clock { display: flex; flex-direction: column; align-items: center; line-height: 17px; }
.lang { margin-right: 15px; }
.clock { width: 66px; }
```
